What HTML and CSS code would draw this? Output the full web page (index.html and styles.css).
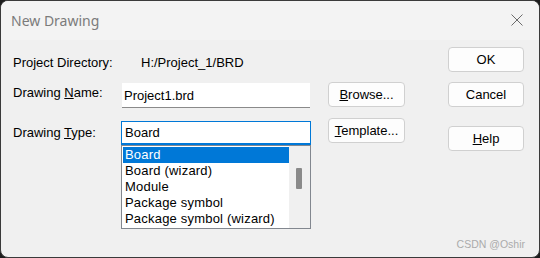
FILE: index.html
```html
<!DOCTYPE html>
<html lang="en">
  <head>
    <meta charset="UTF-8" />
    <meta name="viewport" content="width=device-width, initial-scale=1.0" />
    <title>New Drawing</title>
    <link rel="stylesheet" href="styles.css">
  </head>
  <body>
    <div class="window">
      <div class="titlebar">
        <span class="title">New Drawing</span>
        <svg class="close" width="12" height="12" viewBox="0 0 12 12">
          <path d="M0.5 0.5 L11.5 11.5 M11.5 0.5 L0.5 11.5" stroke="#6b6b6b" stroke-width="1" fill="none" />
        </svg>
      </div>
      <div class="content">
        <div class="form">
          <div class="row row-dir">
            <span class="label label-dir">Project Directory:</span>
            <span class="value">H:/Project_1/BRD</span>
          </div>
          <div class="row row-name">
            <label class="label label-name" for="drawingName">Drawing <u>N</u>ame:</label>
            <input class="field" id="drawingName" type="text" value="Project1.brd" />
            <button class="btn btn-side"><u>B</u>rowse...</button>
          </div>
          <div class="row row-type">
            <label class="label label-type">Drawing <u>T</u>ype:</label>
            <div class="combo">
              <div class="combo-box">Board</div>
              <div class="listbox">
                <ul class="list-items">
                  <li class="selected">Board</li>
                  <li>Board (wizard)</li>
                  <li>Module</li>
                  <li>Package symbol</li>
                  <li>Package symbol (wizard)</li>
                </ul>
                <div class="scrollbar"><div class="thumb"></div></div>
              </div>
            </div>
            <button class="btn btn-template"><u>T</u>emplate...</button>
          </div>
        </div>
        <div class="actions">
          <button class="btn btn-ok">OK</button>
          <button class="btn btn-cancel">Cancel</button>
          <button class="btn btn-help"><u>H</u>elp</button>
        </div>
      </div>
      <div class="watermark">CSDN @Oshir</div>
    </div>
  </body>
</html>
```

FILE: styles.css
```css
body {
  margin: 0;
  padding: 0;
  background-color: #1c1c1c;
  font-family: "Liberation Sans", Arial, sans-serif;
  font-size: 13px;
  color: #000;
}

.window {
  position: relative;
  box-sizing: border-box;
  width: 540px;
  height: 258px;
  border: 1px solid #3a3a3a;
  border-radius: 8px;
  overflow: hidden;
  background-color: #f0f0f0;
}

.titlebar {
  display: flex;
  align-items: center;
  height: 39px;
  padding-left: 10px;
  padding-right: 16px;
  background-color: #f3f3f3;
}

.title {
  font-family: "Noto Sans", sans-serif;
  font-size: 14px;
  color: #7b7b7b;
  margin-top: -1px;
}

.close {
  margin-left: auto;
  margin-top: -1px;
}

.content {
  display: flex;
  justify-content: space-between;
  padding-left: 12px;
  padding-right: 15px;
}

.form {
  display: flex;
  flex-direction: column;
}

.row {
  display: flex;
  align-items: flex-start;
  line-height: 15px;
}

.label u,
.btn u {
  text-underline-offset: 1px;
}

.row-dir {
  margin-top: 15px;
  height: 15px;
}

.label-dir {
  width: 128px;
}

.row-name {
  margin-top: 12px;
  height: 26px;
}

.label-name {
  width: 109px;
  margin-top: 3px;
}

.field {
  box-sizing: border-box;
  width: 188px;
  height: 25px;
  margin: 1px 0 0 0;
  padding: 0 2px;
  border: none;
  border-bottom: 1px solid #8a8a8a;
  background-color: #fff;
  font-family: "Liberation Sans", Arial, sans-serif;
  font-size: 13px;
  color: #000;
  outline: none;
}

.btn {
  box-sizing: border-box;
  height: 25px;
  padding: 0;
  border: 1px solid #d0d0d0;
  border-radius: 4px;
  background-color: #fdfdfd;
  font-family: "Liberation Sans", Arial, sans-serif;
  font-size: 13px;
  color: #000;
}

.btn-side {
  width: 77px;
  margin-left: 18px;
}

.row-type {
  margin-top: 10px;
  height: 26px;
}

.label-type {
  width: 108px;
  margin-top: 7px;
}

.combo {
  position: relative;
  width: 190px;
  margin-top: 3px;
}

.combo-box {
  box-sizing: border-box;
  height: 24px;
  padding: 3px 3px 0;
  border: 1px solid #0078d7;
  border-bottom-width: 2px;
  background-color: #fff;
}

.listbox {
  position: absolute;
  top: 100%;
  left: 0;
  box-sizing: border-box;
  display: flex;
  width: 190px;
  height: 84px;
  border: 1px solid #82878f;
  background-color: #fff;
}

.list-items {
  flex: 1;
  margin: 0;
  padding: 1px 0 0 1px;
  list-style: none;
}

.list-items li {
  height: 16px;
  line-height: 16px;
  padding-left: 2px;
  letter-spacing: 0.2px;
  white-space: nowrap;
}

.list-items li.selected {
  background-color: #0078d7;
  color: #fff;
}

.scrollbar {
  width: 21px;
  background-color: #f0f0f0;
}

.thumb {
  width: 6px;
  height: 21px;
  margin: 22px 0 0 7px;
  border-radius: 1px;
  background-color: #8a8a8a;
}

.btn-template {
  width: 77px;
  margin-left: 17px;
}

.actions {
  display: flex;
  flex-direction: column;
  padding-top: 7px;
}

.actions .btn {
  width: 76px;
}

.btn-cancel {
  margin-top: 10px;
}

.btn-help {
  margin-top: 19px;
}

.watermark {
  position: absolute;
  right: 14px;
  bottom: 7px;
  font-size: 10.5px;
  color: #ababab;
}
```
